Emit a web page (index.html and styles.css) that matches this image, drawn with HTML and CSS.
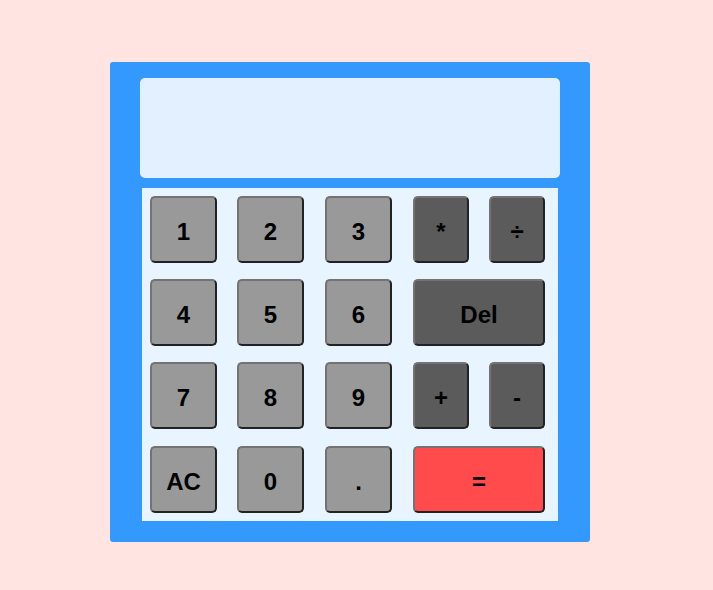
FILE: index.html
```html
<!DOCTYPE html>
<html>
<head>
<meta charset="utf-8">
<link rel="stylesheet" href="styles.css">
</head>
<body>
<div class="calc">
  <div class="display"></div>
  <div class="keypad">
    <button class="key num">1</button>
    <button class="key num">2</button>
    <button class="key num">3</button>
    <button class="key op">*</button>
    <button class="key op">÷</button>
    <button class="key num">4</button>
    <button class="key num">5</button>
    <button class="key num">6</button>
    <button class="key op wide">Del</button>
    <button class="key num">7</button>
    <button class="key num">8</button>
    <button class="key num">9</button>
    <button class="key op">+</button>
    <button class="key op">-</button>
    <button class="key num">AC</button>
    <button class="key num">0</button>
    <button class="key num">.</button>
    <button class="key eq wide">=</button>
  </div>
</div>
</body>
</html>
```
FILE: styles.css
```css
html, body {
  margin: 0;
  padding: 0;
}
body {
  background: #ffe4e1;
  font-family: "Liberation Sans", Arial, sans-serif;
  width: 713px;
  height: 590px;
  padding-top: 62px;
  box-sizing: border-box;
}
.calc {
  width: 480px;
  height: 480px;
  box-sizing: border-box;
  margin-left: 110px;
  background: #3399ff;
  border-radius: 3px;
  padding: 16px 30px 0 30px;
  display: flex;
  flex-direction: column;
  gap: 10px;
}
.display {
  height: 100px;
  background: #e2f0ff;
  border-radius: 5px;
}
.keypad {
  margin: 0 2px;
  background: #e8f4ff;
  padding: 8px 0 8px 8px;
  display: grid;
  grid-template-columns: 87px 88px 88px 76px 57px;
  grid-template-rows: 83px 83px 84px 67px;
}
.key {
  width: 67px;
  height: 67px;
  box-sizing: border-box;
  border: 2px solid;
  border-color: #737373 #222 #222 #737373;
  border-radius: 5px;
  font-family: "Liberation Sans", Arial, sans-serif;
  font-weight: bold;
  font-size: 24px;
  color: #000;
  padding: 5px 0 0 0;
  margin: 0;
  display: flex;
  align-items: center;
  justify-content: center;
}
.num {
  background: #999999;
}
.op {
  background: #5b5b5b;
  width: 56px;
}
.eq {
  background: #ff4b4b;
}
.wide {
  grid-column: span 2;
  width: 132px;
}
```
